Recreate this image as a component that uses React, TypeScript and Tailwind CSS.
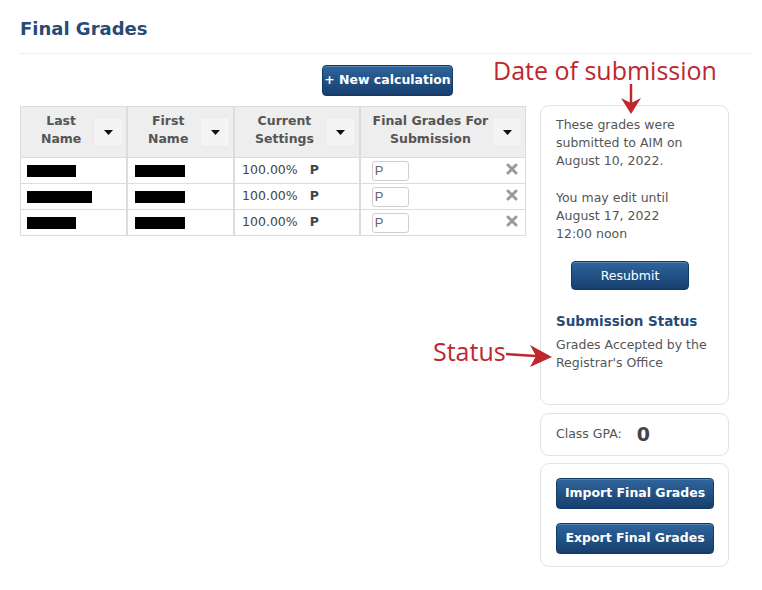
const font = { fontFamily: '"DejaVu Sans", Verdana, sans-serif' };

const btn =
  'rounded-[4px] border border-[#123a66] bg-gradient-to-b from-[#2f659d] to-[#173f6e] text-white font-bold shadow-[inset_0_1px_0_rgba(255,255,255,0.2)]';

type Row = { last: number; first: number };

const rows: Row[] = [
  { last: 49, first: 50 },
  { last: 65, first: 50 },
  { last: 49, first: 50 },
];

function Caret() {
  return (
    <div className="flex h-[30px] w-[30px] items-center justify-center rounded-[3px] border border-[#ebebeb] bg-[#f4f4f4]">
      <svg width="9" height="5" viewBox="0 0 9 5">
        <path d="M0 0h9L4.5 5z" fill="#111" />
      </svg>
    </div>
  );
}

function HeadCell({ label, width, last }: { label: string[]; width: string; last?: boolean }) {
  return (
    <th className={`${width} ${last ? '' : 'border-r-2 border-[#dcdcdc]'} p-0 align-middle`}>
      <div className="flex items-center pl-2 pr-[3px]">
        <div className="-mt-[5px] flex-1 text-center text-[12.5px] font-bold leading-[18px] text-[#555]">
          {label.map((l) => (
            <div key={l}>{l}</div>
          ))}
        </div>
        <Caret />
      </div>
    </th>
  );
}

function RedArrowDown() {
  return (
    <svg width="22" height="30" viewBox="0 0 22 30">
      <path d="M11 0v20" stroke="#c0272d" strokeWidth="2.5" />
      <path d="M1 14L11 30L21 14L11 19z" fill="#c0272d" />
    </svg>
  );
}

function RedArrowRight() {
  return (
    <svg width="46" height="24" viewBox="0 0 46 24">
      <path d="M0 11 L30 13" stroke="#c0272d" strokeWidth="2.5" />
      <path d="M24 2 L46 14 L24 24 L30 13z" fill="#c0272d" />
    </svg>
  );
}

export default function App() {
  return (
    <div className="relative h-[590px] w-[762px] bg-white" style={font}>
      <div className="pl-5 pr-[10px] pt-[17px]">
        <h1 className="text-[18px] font-bold leading-6 text-[#284a74]">Final Grades</h1>
        <div className="mt-[12px] border-t border-dotted border-[#e2e2e2]" />

        <div className="flex gap-[14px]">
          <div className="w-[506px]">
            <div className="mt-[11px] flex pl-[302px]">
              <button className={`${btn} h-[31px] w-[131px] text-[12.5px]`}>+ New calculation</button>
            </div>

            <table className="mt-[10px] w-full border-collapse border border-[#dcdcdc] text-[12.5px] text-[#444]">
              <thead>
                <tr className="h-[51px] bg-[#eeeeee]">
                  <HeadCell label={['Last', 'Name']} width="w-[107px]" />
                  <HeadCell label={['First', 'Name']} width="w-[107px]" />
                  <HeadCell label={['Current', 'Settings']} width="w-[126px]" />
                  <HeadCell label={['Final Grades For', 'Submission']} width="w-[166px]" last />
                </tr>
              </thead>
              <tbody>
                {rows.map((r, i) => (
                  <tr key={i} className="h-[26px] border-t border-[#dcdcdc]">
                    <td className="border-r-2 border-[#dcdcdc] pl-[6px]">
                      <div className="h-[12px] bg-black" style={{ width: r.last }} />
                    </td>
                    <td className="border-r-2 border-[#dcdcdc] pl-[7px]">
                      <div className="h-[12px] bg-black" style={{ width: r.first }} />
                    </td>
                    <td className="border-r-2 border-[#dcdcdc] pl-[7px]">
                      <span>100.00%</span>
                      <span className="ml-[12px] font-bold">P</span>
                    </td>
                    <td className="pl-[11px]">
                      <div className="flex items-center justify-between pr-[7px]">
                        <div
                          className="flex h-[20px] w-[37px] items-center rounded-[3px] border border-[#cfcfcf] pl-[2px] text-[13px] text-[#666]"
                          style={{ fontFamily: '"Liberation Sans", Arial, sans-serif' }}
                        >
                          P
                        </div>
                        <svg width="12" height="12" viewBox="0 0 12 12" className="-mt-[4px]">
                          <path d="M2 2L10 10M10 2L2 10" stroke="#9a9a9a" strokeWidth="3" strokeLinecap="round" />
                        </svg>
                      </div>
                    </td>
                  </tr>
                ))}
              </tbody>
            </table>
          </div>

          <div className="mt-[51px] flex w-[189px] flex-col text-[12.5px] text-[#555]">
            <div className="h-[300px] rounded-[9px] border border-[#e2e2e2] px-[15px] pt-[10px] leading-[18px]">
              <p>
                These grades were
                <br />
                submitted to AIM on
                <br />
                August 10, 2022.
              </p>
              <p className="mt-[19px]">
                You may edit until
                <br />
                August 17, 2022
                <br />
                12:00 noon
              </p>
              <div className="mt-[18px] flex pl-[15px]">
                <button className={`${btn} h-[29px] w-[118px] font-normal`}>Resubmit</button>
              </div>
              <h2 className="mt-[22px] text-[13.5px] font-bold text-[#284a74]">Submission Status</h2>
              <p className="mt-[6px]">
                Grades Accepted by the
                <br />
                Registrar's Office
              </p>
            </div>

            <div className="mt-[8px] flex h-[43px] items-center rounded-[9px] border border-[#e2e2e2] px-[15px]">
              <span>Class GPA:</span>
              <span className="ml-[15px] text-[19px] font-bold text-[#444]">0</span>
            </div>

            <div className="mt-[7px] flex h-[104px] flex-col gap-[14px] rounded-[9px] border border-[#e2e2e2] px-[15px] pt-[14px]">
              <button className={`${btn} h-[31px] w-[158px] text-[12.5px]`}>Import Final Grades</button>
              <button className={`${btn} h-[31px] w-[158px] text-[12.5px]`}>Export Final Grades</button>
            </div>
          </div>
        </div>
      </div>

      {/* annotations */}
      <div
        className="absolute left-[493px] top-[54px] text-[25px] leading-8 text-[#c0272d]"
        style={{ fontFamily: '"Open Sans", "Noto Sans", sans-serif' }}
      >
        Date of submission
      </div>
      <div className="absolute left-[620px] top-[84px]">
        <RedArrowDown />
      </div>
      <div
        className="absolute left-[433px] top-[335px] text-[25px] leading-8 text-[#c0272d]"
        style={{ fontFamily: '"Open Sans", "Noto Sans", sans-serif' }}
      >
        Status
      </div>
      <div className="absolute left-[506px] top-[343px]">
        <RedArrowRight />
      </div>
    </div>
  );
}
